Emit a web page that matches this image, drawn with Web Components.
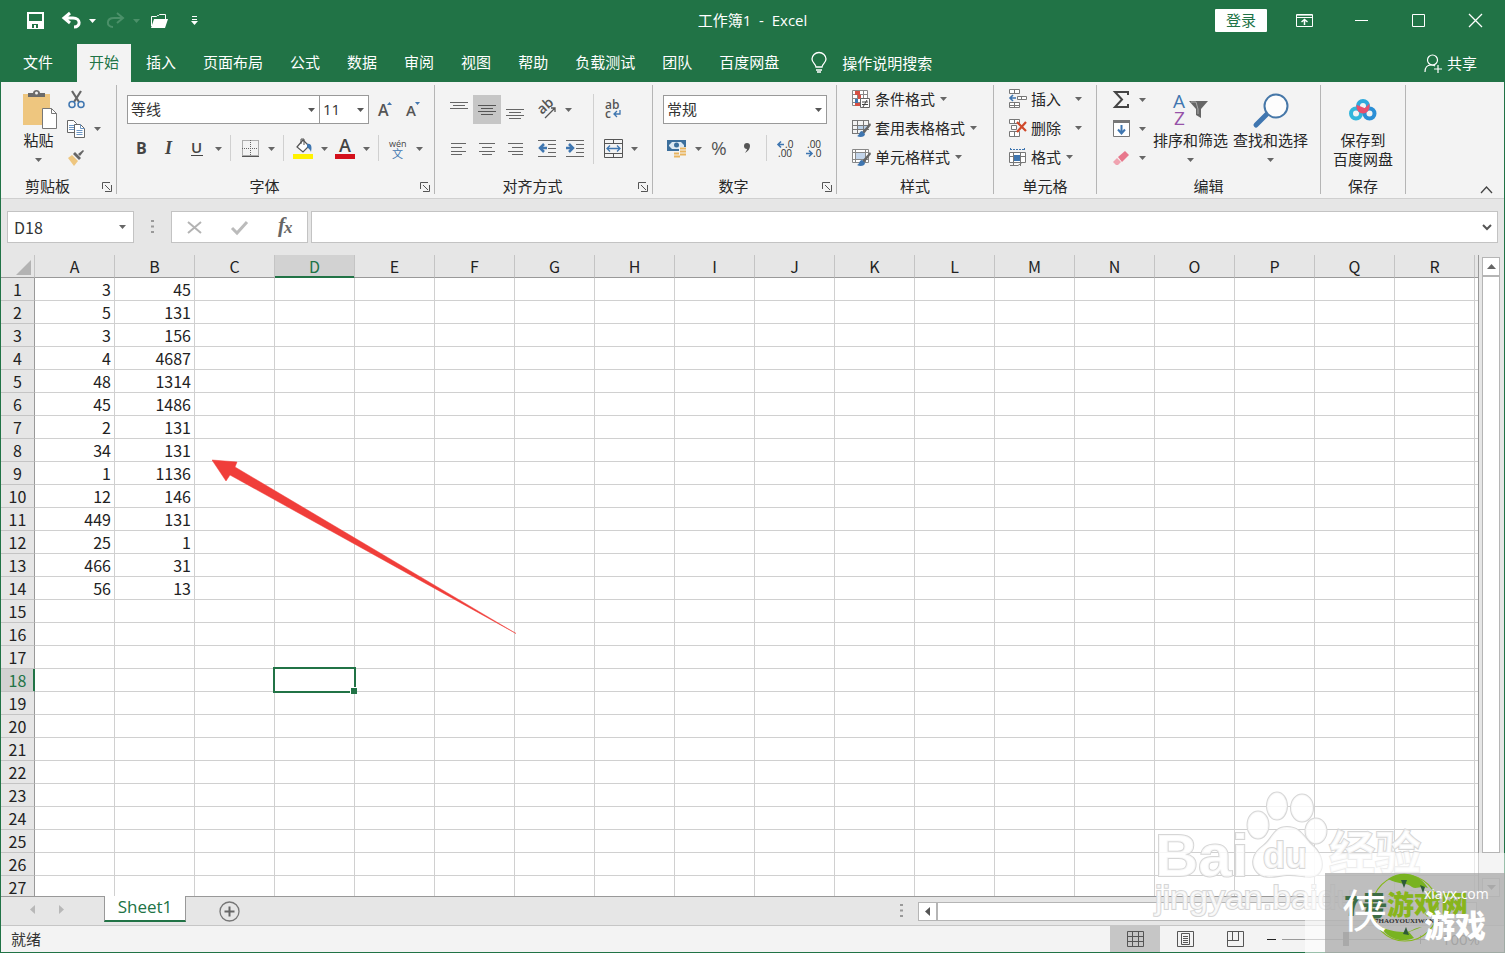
<!DOCTYPE html>
<html lang="zh-CN">
<head>
<meta charset="utf-8">
<title>工作簿1 - Excel</title>
<style>
  html, body { margin: 0; height: 100%; overflow: hidden; }
  body {
    --green: #217346;
    --panel: #f3f3f3;
    --chrome: #e6e6e6;
    --ui: "Open Sans", "Noto Sans CJK SC", sans-serif;
    --cells: "Noto Sans CJK SC", sans-serif;
    font: 15px/20px var(--ui);
    color: #262626;
  }
</style>
</head>
<body>
<xl-app></xl-app>

<script>
const caretShape = '<path d="M0 0h7L3.500 4z" fill="currentColor"/>';
const tableGrid = '<path d="M1 2.500h17M1 7.500h17M1 11.500h17M1.500 2v14M6.500 2v14M12.500 2v14M17.500 2v8M1 15.500h8" stroke="#777" fill="none"/>';
const brush = '<path d="M19 5l-8 9 2 2 7-9z" fill="#666"/><path d="M11 13c-3 0-2 4-5 5 3 2 8 1 8-2z" fill="#3f76b0"/>';

/* name: [width, height, svg content] */
const ICONS = {
  caret: [7, 4, caretShape],
  save: [17, 17, '<path d="M1 1h15v15H1z" fill="none" stroke="#fff" stroke-width="2"/><path d="M2 9h13v7H2z" fill="#fff"/><path d="M5 12h6v4H9v-3H7v3H5z" fill="#217346"/>'],
  undo: [19, 17, '<path d="M8 1L2 6l6 5M3 6h8c8 0 8 9 1 9" fill="none" stroke="#fff" stroke-width="3"/>'],
  redo: [19, 17, '<path d="M11 1l6 5-6 5M16 6H8C0 6 0 15 7 15" fill="none" stroke="#4b9069" stroke-width="2"/>'],
  open: [19, 16, '<path d="M1.500 13V3.500h5l1-1h1l1-1h6V6" fill="none" stroke="#fff"/><path d="M4 6h14l-3 9H1z" fill="#fff"/>'],
  more: [7, 9, '<path d="M1 .5h5M1 3.500h5" stroke="#fff"/><path d="M0 5h7L3.500 9z" fill="#fff"/>'],
  display: [17, 13, '<path d="M.5.5h16v12H.5zM0 3.500h17" fill="none" stroke="#fff"/><path d="M1 1h15v1H1z" fill="#fff" fill-opacity=".6"/><path d="M8.500 11V6M5.500 8l3-2.500 3 2.500" fill="none" stroke="#fff" stroke-width="1.500"/>'],
  min: [13, 13, '<path d="M0 6.500h13" stroke="#fff"/>'],
  max: [13, 13, '<path d="M.5.5h12v12H.5z" fill="none" stroke="#fff"/>'],
  close: [13, 13, '<path d="M0 0l13 13M13 0L0 13" stroke="#fff" stroke-width="1.300"/>'],
  bulb: [16, 20, '<path d="M5 14c0-3-4-4-4-8a7 6.500 0 0 1 14 0c0 4-4 5-4 8zM5 17h6M6 19h4" fill="none" stroke="#fff" stroke-width="1.300"/>'],
  share: [19, 19, '<circle cx="8.500" cy="6" r="5" fill="none" stroke="#fff" stroke-width="1.200"/><path d="M1 18c0-4 2-7 6-7 2 0 3 0 4 1M14 11v8M10 15h8" fill="none" stroke="#fff" stroke-width="1.200"/>'],
  launch: [10, 10, '<path d="M.5 7V.5H8M3 3l5 5M9.500 3v6.500H3" fill="none" stroke="#555"/>'],
  up: [13, 8, '<path d="M1 7l5.500-6L12 7" fill="none" stroke="#444" stroke-width="1.300"/>'],

  paste: [31, 39, '<path d="M0 4h27v31H0z" fill="#eec67f"/><path d="M5 7V3h5c0-4 7-4 7 0h5v4z" fill="#6b6b6b"/><circle cx="13.500" cy="3" r="1.500" fill="#f3f3f3"/><path d="M19.500 18.500h9l5 5v15h-14z" fill="#fff" stroke="#777"/><path d="M28.500 18.500v5h5" fill="none" stroke="#777"/>'],
  cut: [17, 19, '<path d="M4 1l7 11M13 1L6 12" stroke="#666" stroke-width="2.200"/><circle cx="4" cy="14.500" r="3" fill="none" stroke="#3f76b0" stroke-width="1.500"/><circle cx="13" cy="14.500" r="3" fill="none" stroke="#3f76b0" stroke-width="1.500"/>'],
  copy: [18, 18, '<path d="M.5.5h6l3 3v9h-9z" fill="#fff" stroke="#666"/><path d="M2 5.500h5M2 7.500h5M2 9.500h5" stroke="#6c96c4"/><path d="M7.500 4.500h6l4 4v9h-10z" fill="#fff" stroke="#666"/><path d="M13.500 4.500v4h4M9.500 10.500h6M9.500 12.500h6M9.500 14.500h6" stroke="#6c96c4" fill="none"/>'],
  painter: [18, 16, '<path d="M1 8l4-3 6 6-4 5z" fill="#eec67f"/><path d="M6 4l2-2 6 6-2 2z" fill="#666"/><path d="M11 4l5-4 1 1-4 5z" fill="#666"/>'],
  biggerA: [14, 16, '<text x="0" y="14" font-family="Open Sans" font-size="16" font-weight="600" fill="#555">A</text><path d="M9 3l2.500-3L14 3z" fill="#3f76b0"/>'],
  smallerA: [14, 16, '<text x="0" y="14" font-family="Open Sans" font-size="15" font-weight="600" fill="#555">A</text><path d="M9 0l2.500 3L14 0z" fill="#3f76b0"/>'],
  bold: [14, 18, '<text x="2" y="14" font-family="Open Sans" font-size="16" font-weight="700" fill="#444">B</text>'],
  italic: [14, 18, '<text x="3" y="14" font-family="Liberation Serif" font-size="18" font-weight="700" font-style="italic" fill="#444">I</text>'],
  under: [14, 18, '<text x="1" y="13" font-family="Open Sans" font-size="15" font-weight="600" fill="#444">U</text><path d="M1 15.500h12" stroke="#444"/>'],
  borders: [17, 17, '<path d="M.5.5h16v15H.5zM8.500 0v16M0 8.500h16" fill="none" stroke="#666" stroke-dasharray="1 1"/><path d="M0 16.500h17" stroke="#555"/>'],
  fill: [20, 21, '<path d="M4 9l6-7 6 6-6 6z" fill="#fff" stroke="#555" stroke-width="1.200"/><path d="M8 6V1h3v6" fill="none" stroke="#555"/><path d="M14 6c5-1 5 4 4 8-1-3-2-3-4-5z" fill="#3f76b0"/><path d="M0 16h20v5H0z" fill="#fff200"/>'],
  fontColor: [20, 21, '<text x="4" y="14" font-family="Open Sans" font-size="18" font-weight="600" fill="#444">A</text><path d="M0 16h20v5H0z" fill="#d4101b"/>'],
  phonetic: [18, 20, '<text x="0" y="8" font-family="Open Sans" font-size="9" fill="#444">wén</text><text x="3" y="19" font-family="Noto Sans CJK SC" font-size="11" fill="#3f76b0">文</text>'],
  top: [18, 16, '<path d="M0 .5h18M3 3.500h12M0 6.500h18" stroke="#666"/>'],
  middle: [18, 16, '<path d="M0 3.500h18M3 6.500h12M0 9.500h18M3 12.500h12" stroke="#555"/>'],
  bottom: [18, 16, '<path d="M0 7.500h18M3 10.500h12M0 13.500h18M3 16.500h12" stroke="#666"/>'],
  orient: [20, 18, '<text transform="translate(5 14) rotate(-42)" font-family="Open Sans" font-size="14" font-weight="600" fill="#555">ab</text><path d="M8 17L18 7M14 7h4v4" fill="none" stroke="#555" stroke-width="1.300"/>'],
  wrap: [16, 18, '<text x="0" y="8" font-family="Open Sans" font-size="12" font-weight="600" fill="#555">ab</text><text x="0" y="17" font-family="Open Sans" font-size="12" font-weight="600" fill="#555">c</text><path d="M15 9v4H9m3-3l-3 3 3 3" fill="none" stroke="#3f76b0" stroke-width="1.300"/>'],
  left: [16, 12, '<path d="M0 .5h15M0 4.500h11M0 8.500h15M0 11.500h11" stroke="#666"/>'],
  center: [16, 12, '<path d="M0 .5h16M3 4.500h10M0 8.500h16M3 11.500h10" stroke="#666"/>'],
  right: [16, 12, '<path d="M1 .5h15M5 4.500h11M1 8.500h15M5 11.500h11" stroke="#666"/>'],
  outdent: [18, 17, '<path d="M0 .5h18M10 4.500h8M10 8.500h8M10 12.500h8M0 16.500h18" stroke="#666"/><path d="M9 8H3m3-4L2 8l4 4" fill="none" stroke="#3f76b0" stroke-width="2.500"/>'],
  indent: [18, 17, '<path d="M0 .5h18M10 4.500h8M10 8.500h8M10 12.500h8M0 16.500h18" stroke="#666"/><path d="M0 8h6M3 4l4 4-4 4" fill="none" stroke="#3f76b0" stroke-width="2.500"/>'],
  merge: [19, 19, '<path d="M.5.5h18v18H.5zM0 4.500h19M0 14.500h19M9.500 0v5M9.500 14v5" fill="none" stroke="#555"/><path d="M3 9.500h13M6 6.500l-3 3 3 3M13 6.500l3 3-3 3" fill="none" stroke="#3f76b0" stroke-width="1.300"/>'],
  money: [20, 20, '<path d="M0 1h19v11H0z" fill="#3c6f9c"/><path d="M2 3h15v7H2z" fill="#dce8f2"/><path d="M2 3h3L2 6zM17 3h-3l3 3zM2 10V7l3 3z" fill="#3c6f9c"/><circle cx="9.500" cy="6" r="2.500" fill="#3c6f9c"/><path d="M12 8h8v5h-3v7H7v-6h5z" fill="#f3f3f3"/><path d="M13 9.500h6M13 12.500h6M13 15.500h6M7 14.500h5M7 17.500h6" stroke="#e9b560" stroke-width="2"/>'],
  percent: [18, 18, '<text x="1" y="15" font-family="Open Sans" font-size="19" fill="#555">%</text>'],
  comma: [8, 14, '<path d="M1 4a3 3 0 0 1 6 0c0 3-2 5-5 7 1-2 2-3 2-4C2 7 1 6 1 4z" fill="#555"/>'],
  incDec: [18, 18, '<text x="8" y="8" font-family="Open Sans" font-size="10" fill="#333">.0</text><text x="1" y="17" font-family="Open Sans" font-size="10" fill="#333">.00</text><path d="M7 4.500H2m2-3l-3 3 3 3" fill="none" stroke="#3f76b0" stroke-width="1.600"/>'],
  decDec: [18, 18, '<text x="2" y="8" font-family="Open Sans" font-size="10" fill="#333">.00</text><text x="8" y="17" font-family="Open Sans" font-size="10" fill="#333">.0</text><path d="M1 13.500h5m-2-3l3 3-3 3" fill="none" stroke="#3f76b0" stroke-width="1.600"/>'],
  cond: [20, 20, '<path d="M1.500 1.500h15v15h-15zM1 5.500h16M1 9.500h16M1 13.500h16M6.500 1v16M12.500 1v16" fill="#fff" stroke="#888"/><path d="M4 2h5v4H4zM7 6h3v4H7z" fill="#d55044"/><path d="M4 10h3v4H4z" fill="#3f76b0"/><path d="M4 14h5v3H4z" fill="#d55044"/><path d="M9.500 9.500h9v9h-9z" fill="#fff" stroke="#666"/><path d="M11 13h6M11 15.500h6M16 11l-4 7" stroke="#444"/>'],
  tableStyle: [20, 20, '<path d="M6 7h11v5H6z" fill="#b9cfe6"/>' + tableGrid + brush],
  cellStyle: [20, 20, '<path d="M1.500 2.500h16v13h-16zM1 5.500h17M1 12.500h17M4.500 2v14M14.500 2v14" fill="#fff" stroke="#888"/><path d="M5 6h9v6H5z" fill="#c3d5ea"/>' + brush],
  insert: [19, 20, '<path d="M1.500.5h10v4h-10zM6.500 0v5M1.500 13.500h10v5h-10zM6.500 13v6M1 16.500h11M9.500 7.500h9v3h-9zM13.500 7v4" fill="#fff" stroke="#777"/><path d="M8 9H2m3-3L2 9l3 3" fill="none" stroke="#3f76b0" stroke-width="1.600"/>'],
  remove: [19, 20, '<path d="M1.500 1.500h10v4h-10zM6.500 1v5M1.500 13.500h10v5h-10zM6.500 13v6M3.500 7.500h5v4h-5z" fill="#fff" stroke="#777"/><path d="M9 4l9 9M18 4l-9 10" stroke="#d0492b" stroke-width="2.200"/>'],
  format: [19, 20, '<path d="M2 2.500h15M2.500 1v3M16.500 1v3" stroke="#3f76b0" stroke-dasharray="2 1"/><path d="M1.500 5.500h16v10h-16zM1 9.500h17M5.500 5v14M12.500 5v14M2 18.500h8l4-3" fill="#fff" stroke="#777"/><path d="M6 8h6v6H6z" fill="#3f76b0"/>'],
  sum: [16, 17, '<path d="M15 4V1H2l7 7.500L2 16h13v-3" fill="none" stroke="#444" stroke-width="2"/>'],
  fillDown: [17, 17, '<path d="M.5 1.500h16v15H.5z" fill="#fff" stroke="#777"/><path d="M0 0h17v3H0z" fill="#777"/><path d="M8.500 5v8M5 9.500l3.500 4 3.500-4" fill="none" stroke="#3f76b0" stroke-width="2"/>'],
  eraser: [17, 16, '<path d="M5 7l7-6 4 4-7 7z" fill="#e8788c"/><path d="M4 8l4 4-3 3H3l-3-3z" fill="#f0a3b0"/>'],
  sort: [36, 34, '<text x="0" y="15" font-family="Open Sans" font-size="19" fill="#3f76b0">A</text><text x="1" y="32" font-family="Open Sans" font-size="19" fill="#9752a8">Z</text><path d="M16 8h19l-7 8v9l-5-3v-6z" fill="#666"/><path d="M18 9h5l2 7v5" fill="none" stroke="#aaa"/>'],
  find: [36, 34, '<path d="M14 21L3 32" stroke="#3f76b0" stroke-width="5" stroke-linecap="round"/><circle cx="23" cy="13" r="11.500" fill="#fdfdfd" stroke="#4677a8" stroke-width="2"/>'],
  cloud: [28, 22, '<g fill="none" stroke-width="4"><circle cx="7" cy="14.500" r="5" stroke="#32b6dc"/><circle cx="20.500" cy="14.500" r="5" stroke="#2b8fd6"/><circle cx="14" cy="7" r="5" stroke="#2ea9dc"/><path d="M9 8a5 5 0 0 0 10 0l-3 3z" stroke="#e8506e" stroke-width="3"/></g>'],

  dots: [3, 14, '<path d="M0 1h3M0 6.500h3M0 12h3" stroke="#999" stroke-width="2"/>'],
  cancel: [15, 13, '<path d="M1 1l13 11M14 1L1 12" stroke="#b3b3b3" stroke-width="2"/>'],
  accept: [17, 13, '<path d="M1 7l5 5L16 1" fill="none" stroke="#bbb" stroke-width="3"/>'],
  fx: [18, 22, '<text x="2" y="16" font-family="Liberation Serif" font-size="21" font-weight="700" font-style="italic" fill="#666">f</text><text x="8" y="17" font-family="Liberation Serif" font-size="17" font-weight="700" font-style="italic" fill="#666">x</text>'],
  expand: [10, 7, '<path d="M1 1l4 4 4-4" fill="none" stroke="#555" stroke-width="2"/>'],
  arrowUp: [9, 5, '<path d="M0 5h9L4.500 0z" fill="#666"/>'],
  arrowDown: [9, 5, '<path d="M0 0h9L4.500 5z" fill="#666"/>'],
  arrowLeft: [5, 9, '<path d="M5 0v9L0 4.500z" fill="currentColor"/>'],
  arrowRight: [5, 9, '<path d="M0 0v9l5-4.500z" fill="currentColor"/>'],
  plusRound: [21, 21, '<circle cx="10.500" cy="10.500" r="9.500" fill="none" stroke="#777" stroke-width="1.300"/><path d="M10.500 5.500v10M5.500 10.500h10" stroke="#666" stroke-width="2"/>'],
  viewGrid: [17, 16, '<path d="M.5.5h16v15H.5zM0 5.500h17M0 10.500h17M5.500 0v16M11.500 0v16" fill="none" stroke="#555"/>'],
  viewPage: [17, 16, '<path d="M.5.5h16v15H.5z" fill="none" stroke="#555"/><path d="M4.500 2.500h8v11h-8zM6 5.500h5M6 7.500h5M6 9.500h5M6 11.500h5" fill="none" stroke="#555"/>'],
  viewBreak: [17, 16, '<path d="M.5.5h16v15H.5zM0 9.500h11M5.500 0v10M11.500 0v10" fill="none" stroke="#555"/>'],
  minus: [9, 9, '<path d="M0 4.500h9" stroke="#222"/>'],
  plus: [9, 9, '<path d="M0 4.500h9M4.500 0v9" stroke="#555"/>']
};

const baseCss = `
  :host, * { box-sizing: border-box; }
  button { border: 0; margin: 0; padding: 0; background: none; font: inherit; color: inherit;
           display: flex; align-items: center; justify-content: center; }
`;
function define(name, css, html) {
  const template = document.createElement('template');
  customElements.define(name, class extends HTMLElement {
    connectedCallback() {
      if (this.shadowRoot) return;
      template.innerHTML = `<style>${baseCss}${css}</style>` + (typeof html === 'function' ? html(this) : html);
      this.attachShadow({ mode: 'open' }).append(template.content.cloneNode(true));
    }
  });
}

define('xl-icon', ':host{display:block;flex:none} svg{display:block;overflow:visible}', el => {
  const [w, h, body] = ICONS[el.getAttribute('name')];
  return `<svg width="${w}" height="${h}" viewBox="0 0 ${w} ${h}" aria-hidden="true">${body}</svg>`;
});

/* Icon-only tool button; "slim" is the drop-down half of a split button. */
define('xl-tool', `
  :host { display: block; width: 28px; height: 29px; color: #666; flex: none; }
  :host([slim]) { width: 14px; }
  :host([on]) { background: #c6c6c6; }
  button { width: 100%; height: 100%; }
`, el => `<button type="button" aria-label="${el.getAttribute('label') || '更多'}"><xl-icon name="${el.getAttribute('icon')}"></xl-icon></button>`);

/* Icon, caption and drop-down arrow on one line. */
define('xl-row-button', `
  :host { display: block; height: 29px; }
  button { height: 28px; gap: 4px; white-space: nowrap; }
  .caret { color: #666; margin-left: 1px; }
  :host([wide]) .caret { margin-left: 10px; }
`, el => `<button type="button"><xl-icon name="${el.getAttribute('icon')}"></xl-icon><slot></slot><xl-icon class="caret" name="caret"></xl-icon></button>`);

/* Large icon above its caption. */
define('xl-tall-button', `
  :host { display: block; }
  button { flex-direction: column; justify-content: flex-start; line-height: 19px; white-space: nowrap; }
  .pic { height: 41px; display: flex; align-items: center; margin-bottom: 1px; }
  .caret { color: #666; margin-top: 8px; }
`, el => `<button type="button"><span class="pic"><xl-icon name="${el.getAttribute('icon')}"></xl-icon></span><slot></slot>${el.hasAttribute('caret') ? '<xl-icon class="caret" name="caret"></xl-icon>' : ''}</button>`);

define('xl-combo', `
  :host { display: block; position: relative; height: 29px; flex: none; color: #555; }
  select { appearance: none; width: 100%; height: 100%; border: 1px solid #999; border-radius: 0;
           background: #fff; font: 15px/20px var(--ui); color: #333; padding: 0 3px 2px; margin: 0; }
  xl-icon { position: absolute; right: 5px; top: 13px; pointer-events: none; }
`, el => `<select aria-label="${el.getAttribute('label')}"><option>${el.getAttribute('value')}</option></select><xl-icon name="caret"></xl-icon>`);

define('xl-group', `
  :host { display: flex; flex-direction: column; flex: none; height: 109px; border-right: 1px solid #b5b5b5; }
  .body { flex: 1; display: flex; }
  footer { display: flex; align-items: center; height: 16px; }
  footer span { flex: 1; text-align: center; line-height: 16px; }
  footer button { width: 22px; height: 16px; justify-content: flex-end; padding: 2px 4px 0 0; }
`, el => `<div class="body"><slot></slot></div><footer><span>${el.getAttribute('label')}</span>${el.hasAttribute('launcher') ? '<button type="button" aria-label="更多选项"><xl-icon name="launch"></xl-icon></button>' : ''}</footer>`);

define('xl-titlebar', `
  :host { display: grid; grid-template-columns: 1fr auto 1fr; flex: none; height: 41px; align-items: center; background: var(--green); color: #fff; }
  .quick { display: flex; align-items: center; padding-left: 26px; gap: 7px; }
  .quick > button { height: 28px; }
  .split { gap: 8px; }
  .dim { color: #4b9069; }
  .undo { margin-left: 11px; }
  .redo, .open { margin-left: 3px; }
  .more { margin-left: 15px; }
  .title { white-space: pre; padding-bottom: 1px; }
  .win { display: flex; justify-content: flex-end; align-items: center; }
  .login { background: #fff; color: var(--green); width: 52px; height: 23px; border-radius: 1px; margin-right: 9px; padding-bottom: 2px; }
  .win .w { width: 57px; height: 40px; }
`, `
  <div class="quick">
    <button type="button" aria-label="保存"><xl-icon name="save"></xl-icon></button>
    <button type="button" class="split undo" aria-label="撤消"><xl-icon name="undo"></xl-icon><xl-icon name="caret"></xl-icon></button>
    <button type="button" class="split dim redo" aria-label="恢复"><xl-icon name="redo"></xl-icon><xl-icon name="caret"></xl-icon></button>
    <button type="button" class="open" aria-label="打开"><xl-icon name="open"></xl-icon></button>
    <button type="button" class="more" aria-label="自定义快速访问工具栏"><xl-icon name="more"></xl-icon></button>
  </div>
  <div class="title">工作簿1  -  Excel</div>
  <div class="win">
    <button type="button" class="login">登录</button>
    <button type="button" class="w" aria-label="功能区显示选项"><xl-icon name="display"></xl-icon></button>
    <button type="button" class="w" aria-label="最小化"><xl-icon name="min"></xl-icon></button>
    <button type="button" class="w" aria-label="最大化"><xl-icon name="max"></xl-icon></button>
    <button type="button" class="w" aria-label="关闭"><xl-icon name="close"></xl-icon></button>
  </div>`);

define('xl-tabs', `
  :host { display: flex; flex: none; align-items: flex-end; height: 41px; padding: 0 27px 0 10px; background: var(--green); color: #fff; }
  nav { display: flex; gap: 3px; }
  button { height: 38px; padding: 0 12px 2px; white-space: nowrap; }
  nav button:first-child { margin-right: 9px; }
  button[aria-selected=true] { background: var(--panel); color: var(--green); }
  .tell { gap: 15px; margin-left: 8px; padding-bottom: 0; }
  .share { gap: 4px; margin-left: auto; padding: 0; }
`, `
  <nav role="tablist">${['文件','开始','插入','页面布局','公式','数据','审阅','视图','帮助','负载测试','团队','百度网盘']
    .map((t, i) => `<button type="button" role="tab" aria-selected="${i === 1}">${t}</button>`).join('')}</nav>
  <button type="button" class="tell"><xl-icon name="bulb"></xl-icon>操作说明搜索</button>
  <button type="button" class="share"><xl-icon name="share"></xl-icon>共享</button>`);

define('xl-ribbon', `
  :host { display: flex; flex: none; height: 117px; padding-top: 3px; background: var(--panel); border-bottom: 1px solid #cfcfcf; }
  .col { display: flex; flex-direction: column; }
  .line { display: flex; }
  .two { padding-top: 10px; gap: 10px; }
  .sep { width: 1px; height: 26px; margin: 1px 5px; background: #d0d0d0; }
  .long { width: 1px; height: 70px; margin: 9px 5px 0 4px; background: #d0d0d0; }
  .tall { padding-top: 4px; }
  .end { margin-left: auto; align-self: flex-end; width: 36px; height: 17px; }
`, `
  <xl-group label="剪贴板" launcher style="width:116px">
    <xl-tall-button class="tall" icon="paste" caret style="margin-left:22px">粘贴</xl-tall-button>
    <div class="col" style="margin-left:8px">
      <xl-tool icon="cut" label="剪切"></xl-tool>
      <div class="line"><xl-tool icon="copy" label="复制"></xl-tool><xl-tool slim icon="caret"></xl-tool></div>
      <xl-tool icon="painter" label="格式刷"></xl-tool>
    </div>
  </xl-group>

  <xl-group label="字体" launcher style="width:318px">
    <div class="col two" style="padding-left:10px">
      <div class="line">
        <xl-combo label="字体" value="等线" style="width:193px"></xl-combo>
        <xl-combo label="字号" value="11" style="width:50px;margin:0 2px 0 -1px"></xl-combo>
        <xl-tool icon="biggerA" label="增大字号"></xl-tool><xl-tool icon="smallerA" label="减小字号"></xl-tool>
      </div>
      <div class="line">
        <xl-tool icon="bold" label="加粗"></xl-tool><xl-tool icon="italic" label="倾斜"></xl-tool><xl-tool icon="under" label="下划线"></xl-tool><xl-tool slim icon="caret"></xl-tool>
        <span class="sep"></span>
        <xl-tool icon="borders" label="边框"></xl-tool><xl-tool slim icon="caret"></xl-tool>
        <span class="sep"></span>
        <xl-tool icon="fill" label="填充颜色"></xl-tool><xl-tool slim icon="caret"></xl-tool>
        <xl-tool icon="fontColor" label="字体颜色"></xl-tool><xl-tool slim icon="caret"></xl-tool>
        <span class="sep"></span>
        <xl-tool icon="phonetic" label="拼音"></xl-tool><xl-tool slim icon="caret"></xl-tool>
      </div>
    </div>
  </xl-group>

  <xl-group label="对齐方式" launcher style="width:218px">
    <div class="col two" style="padding-left:10px">
      <div class="line">
        <xl-tool icon="top" label="顶端对齐"></xl-tool><xl-tool on icon="middle" label="垂直居中"></xl-tool><xl-tool icon="bottom" label="底端对齐"></xl-tool>
        <xl-tool icon="orient" label="方向" style="margin-left:4px"></xl-tool><xl-tool slim icon="caret"></xl-tool>
      </div>
      <div class="line">
        <xl-tool icon="left" label="左对齐"></xl-tool><xl-tool icon="center" label="居中"></xl-tool><xl-tool icon="right" label="右对齐"></xl-tool>
        <xl-tool icon="outdent" label="减少缩进量" style="margin-left:4px"></xl-tool><xl-tool icon="indent" label="增加缩进量"></xl-tool>
      </div>
    </div>
    <span class="long"></span>
    <div class="col two">
      <xl-tool icon="wrap" label="自动换行"></xl-tool>
      <div class="line"><xl-tool icon="merge" label="合并后居中"></xl-tool><xl-tool slim icon="caret"></xl-tool></div>
    </div>
  </xl-group>

  <xl-group label="数字" launcher style="width:184px">
    <div class="col two" style="padding-left:10px">
      <xl-combo label="数字格式" value="常规" style="width:164px"></xl-combo>
      <div class="line">
        <xl-tool icon="money" label="会计数字格式"></xl-tool><xl-tool slim icon="caret"></xl-tool>
        <xl-tool icon="percent" label="百分比"></xl-tool><xl-tool icon="comma" label="千位分隔"></xl-tool>
        <span class="sep"></span>
        <xl-tool icon="incDec" label="增加小数位数"></xl-tool><xl-tool icon="decDec" label="减少小数位数"></xl-tool>
      </div>
    </div>
  </xl-group>

  <xl-group label="样式" style="width:157px">
    <div class="col" style="padding-left:14px">
      <xl-row-button icon="cond">条件格式</xl-row-button>
      <xl-row-button icon="tableStyle">套用表格格式</xl-row-button>
      <xl-row-button icon="cellStyle">单元格样式</xl-row-button>
    </div>
  </xl-group>

  <xl-group label="单元格" style="width:103px">
    <div class="col" style="padding-left:14px">
      <xl-row-button wide icon="insert">插入</xl-row-button>
      <xl-row-button wide icon="remove">删除</xl-row-button>
      <xl-row-button icon="format">格式</xl-row-button>
    </div>
  </xl-group>

  <xl-group label="编辑" style="width:224px">
    <div class="col" style="padding-left:10px">
      <div class="line"><xl-tool icon="sum" label="自动求和"></xl-tool><xl-tool slim icon="caret"></xl-tool></div>
      <div class="line"><xl-tool icon="fillDown" label="填充"></xl-tool><xl-tool slim icon="caret"></xl-tool></div>
      <div class="line"><xl-tool icon="eraser" label="清除"></xl-tool><xl-tool slim icon="caret"></xl-tool></div>
    </div>
    <xl-tall-button class="tall" icon="sort" caret style="margin-left:4px">排序和筛选</xl-tall-button>
    <xl-tall-button class="tall" icon="find" caret style="margin-left:5px">查找和选择</xl-tall-button>
  </xl-group>

  <xl-group label="保存" style="width:85px">
    <xl-tall-button class="tall" icon="cloud" style="margin:0 auto">保存到<br>百度网盘</xl-tall-button>
  </xl-group>
  <button type="button" class="end" aria-label="折叠功能区"><xl-icon name="up"></xl-icon></button>`);

define('xl-formula-bar', `
  :host { display: flex; flex: none; align-items: center; height: 56px; padding: 0 6px; background: var(--chrome); font: 16px/20px var(--cells); }
  .box { height: 32px; border: 1px solid #c3c3c3; background: #fff; }
  .name { display: flex; align-items: center; width: 127px; color: #666; padding-right: 7px; }
  input { border: 0; outline: 0; padding: 0 0 0 6px; margin: 0; min-width: 0; flex: 1; height: 100%; background: none; font: inherit; color: #333; }
  .dots { width: 37px; display: flex; justify-content: center; }
  .keys { display: flex; width: 137px; margin-right: 3px; }
  .keys button { flex: 1; }
  .formula { flex: 1; display: flex; }
  .formula button { width: 20px; }
`, `
  <div class="box name"><input aria-label="名称框" value="D18"><xl-icon name="caret"></xl-icon></div>
  <div class="dots"><xl-icon name="dots"></xl-icon></div>
  <div class="box keys">
    <button type="button" aria-label="取消"><xl-icon name="cancel"></xl-icon></button>
    <button type="button" aria-label="输入"><xl-icon name="accept"></xl-icon></button>
    <button type="button" aria-label="插入函数"><xl-icon name="fx"></xl-icon></button>
  </div>
  <div class="box formula"><input aria-label="编辑栏"><button type="button" aria-label="展开编辑栏"><xl-icon name="expand"></xl-icon></button></div>`);

const DATA = [[3,45],[5,131],[3,156],[4,4687],[48,1314],[45,1486],[2,131],[34,131],[1,1136],[12,146],[449,131],[25,1],[466,31],[56,13]];
const COLS = [...'ABCDEFGHIJKLMNOPQR', ''];

define('xl-sheet', `
  :host { display: flex; flex: 1; min-height: 0; background: var(--chrome); font: 16px/22px var(--cells); color: #222; }
  .view { flex: 1; min-width: 0; overflow: hidden; border-right: 1px solid #999; border-bottom: 1px solid #999; }
  table { table-layout: fixed; border-collapse: separate; border-spacing: 0; width: 1554px; background: #fff; }
  th, td { height: 23px; padding: 0; border: 0 solid #d0d0d0; border-width: 0 1px 1px 0; font-weight: 400; line-height: 22px; overflow: visible; }
  td { text-align: right; padding-right: 3px; }
  th { background: var(--chrome); border-color: #c4c4c4; text-align: center; }
  thead th { border-bottom-color: #999; }
  tbody th { border-right-color: #999; }
  .on { color: var(--green); }
  th.on { background: #d2d2d2; }
  thead .on { box-shadow: inset 0 -1px var(--green); border-bottom-color: var(--green); }
  tbody th.on { box-shadow: inset -1px 0 var(--green); border-right-color: var(--green); }
  .corner svg { display: block; margin: 3px 3px 0 auto; }
  td.on { position: relative; z-index: 1; }
  td.on::before { content: ""; position: absolute; inset: -2px; border: 2px solid var(--green); }
  td.on::after { content: ""; position: absolute; right: -3px; bottom: -3px; width: 6px; height: 6px; background: var(--green); border: 1px solid #fff; border-width: 1px 0 0 1px; }
  .scroll { display: flex; flex-direction: column; width: 25px; padding: 2px 4px 0 3px; }
  .scroll button { height: 19px; background: #fff; border: 1px solid #b5b5b5; }
  .thumb { height: 577px; background: #fff; border: 1px solid #b5b5b5; }
  .track { flex: 1; }
`, `
  <div class="view"><table>
    <colgroup><col style="width:34px">${COLS.map(() => '<col style="width:80px">').join('')}</colgroup>
    <thead><tr><th class="corner"><svg width="15" height="15"><path d="M15 0v15H0z" fill="#b3b3b3"/></svg></th>${COLS.map(c => `<th scope="col"${c === 'D' ? ' class="on"' : ''}>${c}</th>`).join('')}</tr></thead>
    <tbody>${Array.from({ length: 27 }, (_, r) => `<tr><th scope="row"${r === 17 ? ' class="on"' : ''}>${r + 1}</th>${COLS.map((c, i) =>
      `<td${r === 17 && c === 'D' ? ' class="on"' : ''}>${DATA[r] && i < 2 ? DATA[r][i] : ''}</td>`).join('')}</tr>`).join('')}</tbody>
  </table></div>
  <div class="scroll">
    <button type="button" aria-label="向上滚动"><xl-icon name="arrowUp"></xl-icon></button>
    <div class="thumb"></div><div class="track"></div>
    <button type="button" aria-label="向下滚动"><xl-icon name="arrowDown"></xl-icon></button>
  </div>`);

define('xl-sheet-tabs', `
  :host { display: flex; flex: none; height: 29px; background: var(--chrome); border-bottom: 1px solid #c6c6c6; color: #b8b8b8; }
  .nav { display: flex; width: 103px; padding: 0 35px 3px 23px; justify-content: space-between; }
  .nav button { width: 16px; }
  .tab { width: 82px; height: 26px; margin-top: -1px; padding-bottom: 2px; background: #fff; color: var(--green); font-size: 17px; border: 1px solid #999; border-width: 0 1px 2px; border-bottom-color: var(--green); position: relative; }
  .add { width: 86px; }
  .scroll { margin-left: auto; width: 604px; display: flex; align-items: center; padding-right: 27px; }
  .scroll button, .thumb { height: 19px; background: #fff; border: 1px solid #b5b5b5; color: #555; }
  .scroll button { width: 19px; margin-left: 15px; }
  .thumb { flex: 1; }
`, `
  <div class="nav"><button type="button" aria-label="上一张"><xl-icon name="arrowLeft"></xl-icon></button><button type="button" aria-label="下一张"><xl-icon name="arrowRight"></xl-icon></button></div>
  <button type="button" class="tab">Sheet1</button>
  <button type="button" class="add" aria-label="新工作表"><xl-icon name="plusRound"></xl-icon></button>
  <div class="scroll"><xl-icon name="dots"></xl-icon><button type="button" aria-label="向左滚动"><xl-icon name="arrowLeft"></xl-icon></button><div class="thumb"></div></div>`);

define('xl-status', `
  :host { display: flex; flex: none; align-items: center; height: 26px; padding: 0 24px 0 10px; background: var(--panel); color: #333; }
  .views { display: flex; margin-left: auto; height: 100%; }
  .views button { width: 50px; height: 100%; }
  .views .on { background: #c6c6c6; }
  .step { width: 22px; height: 26px; }
  input { appearance: none; width: 127px; height: 16px; margin: 0; background: linear-gradient(#999, #999) center / 100% 1px no-repeat; }
  input::-webkit-slider-thumb { appearance: none; width: 6px; height: 14px; background: #666; border: 0; border-radius: 0; }
  .pct { width: 49px; text-align: right; color: #333; }
`, `
  <span>就绪</span>
  <div class="views">
    <button type="button" class="on" aria-label="普通"><xl-icon name="viewGrid"></xl-icon></button>
    <button type="button" aria-label="页面布局"><xl-icon name="viewPage"></xl-icon></button>
    <button type="button" aria-label="分页预览"><xl-icon name="viewBreak"></xl-icon></button>
  </div>
  <button type="button" class="step" aria-label="缩小"><xl-icon name="minus"></xl-icon></button>
  <input type="range" aria-label="缩放" min="0" max="100" value="50">
  <button type="button" class="step" aria-label="放大"><xl-icon name="plus"></xl-icon></button>
  <span class="pct">100%</span>`);

/* Site marks laid over the bottom right corner. */
define('xl-watermark', `
  :host { display: block; position: absolute; right: -1px; bottom: -1px; pointer-events: none; }
  svg { display: block; }
`, `
  <svg width="355" height="168" viewBox="1150 785 355 168">
    <g fill="#fff" fill-opacity=".8" stroke="#d6d6d6" stroke-width="2" font-weight="700" paint-order="stroke">
      <text x="1155" y="876" font-family="Liberation Sans" font-size="60">Bai</text>
      <ellipse cx="1258" cy="825" rx="10.500" ry="13.500"/><ellipse cx="1277" cy="806" rx="10" ry="13.500"/>
      <ellipse cx="1302" cy="808" rx="11" ry="13.500"/><ellipse cx="1316" cy="831" rx="10.500" ry="12.500"/>
      <path d="M1287 827c-14 0-14 12-24 19s-13 18-6 26 18 4 30 3 24 5 31-1 4-20-5-28-12-19-26-19z"/>
      <text x="1263" y="868" font-family="Liberation Sans" font-size="36">du</text>
      <text x="1329" y="869" font-family="Noto Sans CJK SC" font-size="46">经验</text>
      <text x="1155" y="909" font-family="Liberation Sans" font-size="34" font-weight="400">jingyan.baidu.com</text>
    </g>
    <path d="M1305 853h200v100h-200z" fill="#fff" fill-opacity=".55"/>
    <path d="M1325 873h180v80h-180z" fill="#a3a3a3" fill-opacity=".7"/>
    <circle cx="1405" cy="908" r="33" fill="none" stroke="#86b817" stroke-width="1.200"/>
    <path d="M1388 879c12-9 31-7 40 9-7-3-12 2-16-1-5-5-14-2-24-8zM1381 927c7 12 20 16 33 11l-5-6 13-5c-9 1-11 5-16 5-9 0-16-1-25-5z" fill="#79b321"/>
    <path d="M1401 880h6l-3 8zM1420 885l5 2-2 6zM1403 934l3-7 3 8z" fill="#2d5a38"/>
    <text x="1344" y="916" font-family="Noto Sans CJK SC" font-size="27" font-weight="900" fill="#3d6c44">7号</text>
    <text x="1387" y="915" font-family="Noto Sans CJK SC" font-size="27" font-weight="900" fill="#88b51c">游戏网</text>
    <text x="1375" y="923" font-family="Liberation Serif" font-size="7" font-weight="700" fill="#333">7HAOYOUXIWANG</text>
    <g fill="#fff">
      <text x="1342" y="928" font-family="Noto Sans CJK SC" font-size="45" font-weight="400">侠</text>
      <text x="1424" y="937" font-family="Noto Sans CJK SC" font-size="31" font-weight="900">游戏</text>
      <text x="1424" y="899" font-family="Open Sans" font-size="14">xiayx.com</text>
    </g>
  </svg>`);

define('xl-app', `
  :host { display: flex; flex-direction: column; position: relative; height: 100vh; border: 1px solid var(--green); border-top: 0; }
  .arrow { position: absolute; left: 211px; top: 459px; pointer-events: none; }
`, `
  <xl-titlebar></xl-titlebar>
  <xl-tabs></xl-tabs>
  <xl-ribbon></xl-ribbon>
  <xl-formula-bar></xl-formula-bar>
  <xl-sheet></xl-sheet>
  <xl-sheet-tabs></xl-sheet-tabs>
  <xl-status></xl-status>
  <svg class="arrow" width="306" height="176"><path d="M0 1l25 2-2 5 281 166.500L18 16l-4 6z" fill="#f03e3a" stroke="#f03e3a" stroke-width=".5"/></svg>
  <xl-watermark></xl-watermark>`);
</script>
</body>
</html>
